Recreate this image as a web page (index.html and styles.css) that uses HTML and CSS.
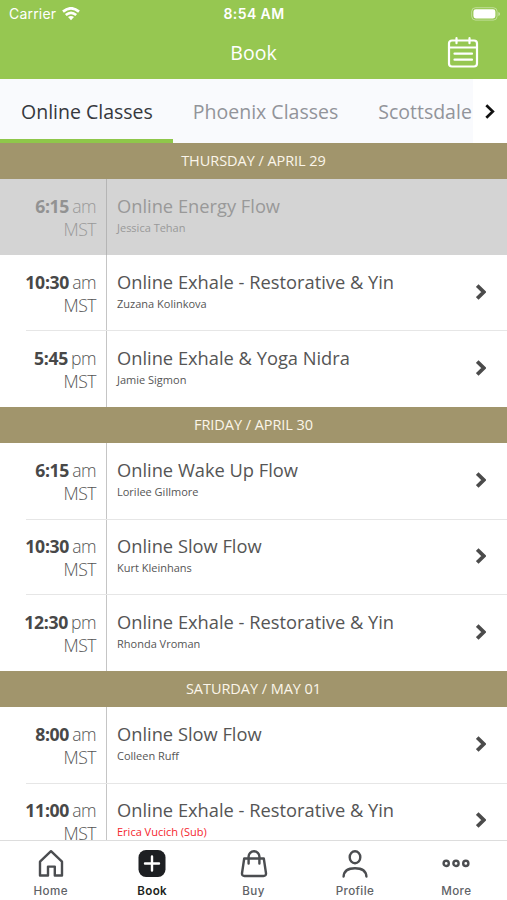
FILE: index.html
```html
<!DOCTYPE html>
<html lang="en">
<head>
    <meta charset="UTF-8">
    <meta name="viewport" content="width=device-width, initial-scale=1.0">
    <title>Book</title>
    <link rel="stylesheet" href="styles.css">
</head>
<body>
    <div class="app">
        <header class="header">
            <div class="status">
                <div class="carrier">
                    <span>Carrier</span>
                    <svg width="18" height="14" viewBox="0 0 18 14" fill="none" stroke="#fff" stroke-width="2.7">
                        <path d="M1 4.6Q9-2 17 4.6M3.8 8Q9 3.6 14.2 8"/>
                        <path d="M6 10.1Q9 7.8 12 10.1L9 13.3Z" fill="#fff" stroke="none"/>
                    </svg>
                </div>
                <div class="clock">8:54 AM</div>
                <svg class="battery" width="30" height="14" viewBox="0 0 30 14">
                    <rect x="0.7" y="0.7" width="25.4" height="12.4" rx="3.8" fill="none" stroke="#fff" stroke-opacity=".4"/>
                    <rect x="2.4" y="2.3" width="22" height="9.2" rx="2.4" fill="#fff"/>
                    <path d="M27.4 5v4q1.6-.6 1.6-2t-1.6-2z" fill="#fff" fill-opacity=".5"/>
                </svg>
            </div>
            <div class="title-bar">
                <h1>Book</h1>
                <svg class="calendar" width="32" height="32" viewBox="0 0 32 32" fill="none" stroke="#fff" stroke-width="2.2" stroke-linecap="round">
                    <rect x="2" y="3.5" width="28" height="26" rx="3"/>
                    <path d="M2 10.5h28M9.5 1.2v5M22.5 1.2v5M7.5 16.7h17.5M7.5 22.7h17.5"/>
                </svg>
            </div>
        </header>

        <nav class="tabs">
            <div class="tab active">Online Classes</div>
            <div class="tab">Phoenix Classes</div>
            <div class="tab">Scottsdale</div>
            <div class="tabs-next">
                <svg width="10" height="15" viewBox="0 0 10 15" fill="none" stroke="#111" stroke-width="2.7"><path d="M1.3 1.2L7.8 7.5L1.3 13.8"/></svg>
            </div>
        </nav>

        <main class="schedule">
            <h2>THURSDAY / APRIL 29</h2>
            <div class="class-row past">
                <div class="time"><b>6:15</b>am<br>MST</div>
                <div class="info"><h3>Online Energy Flow</h3><p>Jessica Tehan</p></div>
            </div>
            <div class="class-row">
                <div class="time"><b>10:30</b>am<br>MST</div>
                <div class="info"><h3>Online Exhale - Restorative &amp; Yin</h3><p>Zuzana Kolinkova</p></div>
                <svg class="arrow" viewBox="0 0 10 16"><path d="M1.2 1.5L7.8 8L1.2 14.5"/></svg>
            </div>
            <div class="class-row">
                <div class="time"><b>5:45</b>pm<br>MST</div>
                <div class="info"><h3>Online Exhale &amp; Yoga Nidra</h3><p>Jamie Sigmon</p></div>
                <svg class="arrow" viewBox="0 0 10 16"><path d="M1.2 1.5L7.8 8L1.2 14.5"/></svg>
            </div>

            <h2>FRIDAY / APRIL 30</h2>
            <div class="class-row">
                <div class="time"><b>6:15</b>am<br>MST</div>
                <div class="info"><h3>Online Wake Up Flow</h3><p>Lorilee Gillmore</p></div>
                <svg class="arrow" viewBox="0 0 10 16"><path d="M1.2 1.5L7.8 8L1.2 14.5"/></svg>
            </div>
            <div class="class-row">
                <div class="time"><b>10:30</b>am<br>MST</div>
                <div class="info"><h3>Online Slow Flow</h3><p>Kurt Kleinhans</p></div>
                <svg class="arrow" viewBox="0 0 10 16"><path d="M1.2 1.5L7.8 8L1.2 14.5"/></svg>
            </div>
            <div class="class-row">
                <div class="time"><b>12:30</b>pm<br>MST</div>
                <div class="info"><h3>Online Exhale - Restorative &amp; Yin</h3><p>Rhonda Vroman</p></div>
                <svg class="arrow" viewBox="0 0 10 16"><path d="M1.2 1.5L7.8 8L1.2 14.5"/></svg>
            </div>

            <h2>SATURDAY / MAY 01</h2>
            <div class="class-row">
                <div class="time"><b>8:00</b>am<br>MST</div>
                <div class="info"><h3>Online Slow Flow</h3><p>Colleen Ruff</p></div>
                <svg class="arrow" viewBox="0 0 10 16"><path d="M1.2 1.5L7.8 8L1.2 14.5"/></svg>
            </div>
            <div class="class-row">
                <div class="time"><b>11:00</b>am<br>MST</div>
                <div class="info"><h3>Online Exhale - Restorative &amp; Yin</h3><p class="sub">Erica Vucich (Sub)</p></div>
                <svg class="arrow" viewBox="0 0 10 16"><path d="M1.2 1.5L7.8 8L1.2 14.5"/></svg>
            </div>
        </main>

        <nav class="bottom-nav">
            <div class="nav-item">
                <svg viewBox="0 0 30 30"><path d="M4 12.7L15 2.2L26 12.7V26.5H18.8V17.6H12V26.5H4Z"/></svg>
                <span>Home</span>
            </div>
            <div class="nav-item active">
                <svg viewBox="0 0 30 30"><rect x="1.5" y="1" width="27" height="27" rx="7.5" fill="#1d1f22" stroke="none"/><path d="M15 7.5v14M8 14.5h14" stroke="#fff"/></svg>
                <span>Book</span>
            </div>
            <div class="nav-item">
                <svg viewBox="0 0 30 30"><path d="M5.2 9.5H24.8L27 24.2Q27.2 27 24.5 27H5.5Q2.8 27 3 24.2ZM9.6 14.5V7.6A5.4 5.4 0 0 1 20.4 7.6V14.5"/></svg>
                <span>Buy</span>
            </div>
            <div class="nav-item">
                <svg viewBox="0 0 30 30"><ellipse cx="15" cy="8.2" rx="5.3" ry="6"/><path d="M3.6 27.5Q4.1 19.2 15 19.2T26.4 27.5"/></svg>
                <span>Profile</span>
            </div>
            <div class="nav-item">
                <svg viewBox="0 0 30 30"><circle cx="5.2" cy="14.4" r="2.6"/><circle cx="15" cy="14.4" r="2.6"/><circle cx="24.8" cy="14.4" r="2.6"/></svg>
                <span>More</span>
            </div>
        </nav>
    </div>
</body>
</html>
```
FILE: styles.css
```css
* {
    box-sizing: border-box;
}
body {
    margin: 0;
    font-family: "Open Sans", "Noto Sans", sans-serif;
    background-color: #fff;
    color: #555;
}
h1, h2, h3, p {
    margin: 0;
    font-weight: 400;
}
svg {
    display: block;
}
.app {
    display: flex;
    flex-direction: column;
    width: 507px;
    height: 900px;
    overflow: hidden;
}
.header {
    flex: none;
    height: 79.4px;
    background-color: #96c751;
    color: #fff;
}
.status {
    display: grid;
    grid-template-columns: 1fr auto 1fr;
    align-items: center;
    height: 27px;
    padding: 0 6px 0 9px;
    font-family: Inter, sans-serif;
    font-size: 14px;
}
.carrier {
    display: flex;
    align-items: center;
    gap: 6px;
    letter-spacing: 0.2px;
}
.clock {
    margin-right: 2px;
    font-weight: 600;
    letter-spacing: 0.4px;
}
.battery {
    justify-self: end;
}
.title-bar {
    display: grid;
    grid-template-columns: 1fr auto 1fr;
    align-items: center;
    height: 51px;
    padding-right: 28px;
    padding-left: 28px;
}
.title-bar h1 {
    grid-column: 2;
    font-size: 19.5px;
}
.calendar {
    justify-self: end;
}
.tabs {
    position: relative;
    flex: none;
    display: flex;
    height: 63.4px;
    background-color: #f9fafd;
    font-size: 19.5px;
    color: #92949a;
}
.tab {
    padding: 0 20px;
    line-height: 65px;
    white-space: nowrap;
}
.tab.active {
    padding-left: 21px;
    border-bottom: 4px solid #8fc74a;
    color: #36383d;
}
.tabs-next {
    position: absolute;
    top: 0;
    right: 0;
    display: flex;
    align-items: center;
    width: 34px;
    height: 100%;
    padding-left: 12px;
    background-color: #fff;
}
.schedule {
    flex: 1;
    min-height: 0;
    overflow: hidden;
}
.schedule h2 {
    height: 36.6px;
    background-color: #a1956c;
    font-size: 14.5px;
    line-height: 36.6px;
    letter-spacing: -0.05px;
    text-align: center;
    color: #fbf5ea;
}
.class-row {
    position: relative;
    display: flex;
    height: 75.8px;
}
/* divider starts inset from the left */
.class-row + .class-row::before {
    content: "";
    position: absolute;
    top: -0.5px;
    left: 26px;
    right: 0;
    height: 1px;
    background-color: #e6e6e6;
}
.past + .class-row::before {
    display: none;
}
.time {
    width: 107px;
    padding: 16px 10px 0 0;
    border-right: 1px solid #c5c5c5;
    font-size: 17.6px;
    font-weight: 300;
    line-height: 23px;
    letter-spacing: -0.5px;
    text-align: right;
}
.time b {
    margin-right: 3px;
    font-weight: 700;
    letter-spacing: -0.3px;
    color: #484848;
}
.info {
    flex: 1;
    padding: 15px 0 0 10px;
}
.info h3 {
    font-size: 18.3px;
    line-height: 24px;
}
.info p {
    padding-top: 1px;
    font-size: 11px;
    line-height: 18px;
}
.info .sub {
    color: #f5262e;
}
.arrow {
    width: 10px;
    height: 16px;
    margin: 29px 21px 0 0;
    fill: none;
    stroke: #4b4b4b;
    stroke-width: 3.8;
}
.past {
    background-color: #d4d4d4;
    color: #999;
}
.past .time {
    border-color: #b5b5b5;
}
.past b {
    color: #929292;
}
.bottom-nav {
    flex: none;
    display: flex;
    height: 60.5px;
    border-top: 1px solid #ddd;
    background-color: #fff;
}
.nav-item {
    flex: 1;
    display: flex;
    flex-direction: column;
    align-items: center;
    padding-top: 8px;
    font-family: Inter, sans-serif;
    font-size: 11.6px;
    font-weight: 500;
    line-height: 18px;
    letter-spacing: 0.4px;
    color: #606266;
}
.nav-item svg {
    width: 30px;
    height: 30px;
    margin-bottom: 3px;
    fill: none;
    stroke: #4b4d50;
    stroke-width: 2.4;
    stroke-linecap: round;
    stroke-linejoin: round;
}
.nav-item.active {
    font-weight: 600;
    color: #1d1f22;
}
```
